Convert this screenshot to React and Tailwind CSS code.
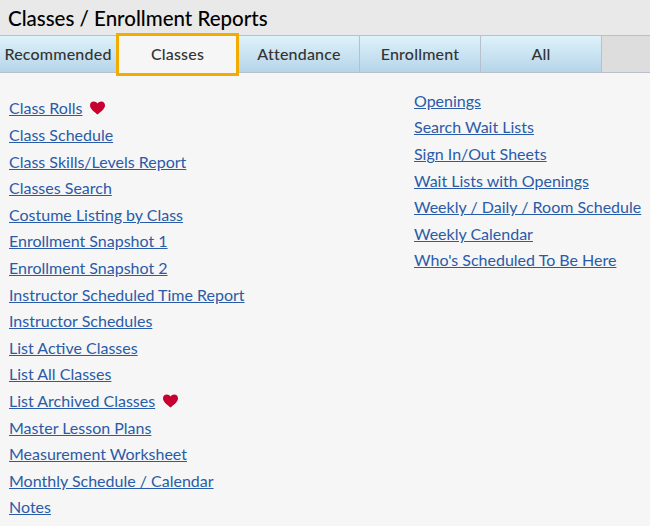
import React from 'react';

const leftLinks = [
  { name: 'Class Rolls', heart: true },
  { name: 'Class Schedule' },
  { name: 'Class Skills/Levels Report' },
  { name: 'Classes Search' },
  { name: 'Costume Listing by Class' },
  { name: 'Enrollment Snapshot 1' },
  { name: 'Enrollment Snapshot 2' },
  { name: 'Instructor Scheduled Time Report' },
  { name: 'Instructor Schedules' },
  { name: 'List Active Classes' },
  { name: 'List All Classes' },
  { name: 'List Archived Classes', heart: true },
  { name: 'Master Lesson Plans' },
  { name: 'Measurement Worksheet' },
  { name: 'Monthly Schedule / Calendar' },
  { name: 'Notes' },
];

const rightLinks = [
  'Openings',
  'Search Wait Lists',
  'Sign In/Out Sheets',
  'Wait Lists with Openings',
  'Weekly / Daily / Room Schedule',
  'Weekly Calendar',
  "Who's Scheduled To Be Here",
];

const Heart = () => (
  <svg viewBox="0 0 16 14" className="w-[15px] h-[14px] ml-[8px] inline-block" fill="#c8002f">
    <path d="M8 14 C6.5 12 0 8.5 0 4.2 C0 1.6 1.7 0 4 0 C5.8 0 7.2 0.8 8 2.2 C8.8 0.8 10.2 0 12 0 C14.3 0 16 1.6 16 4.2 C16 8.5 9.5 12 8 14 Z" />
  </svg>
);

const Tab = ({ label, width }) => (
  <div className={`${width} h-full flex items-center justify-center border-r border-[#b9bfcc] text-[16px] font-medium tracking-[0.2px] text-[#333] bg-gradient-to-b from-[#def2fa] to-[#b6d5e9]`}>
    {label}
  </div>
);

const LinkRow = ({ name, heart }) => (
  <div className="h-[26.6px] flex items-center">
    <a href="#" className="text-[16px] text-[#2a5ba8] underline">{name}</a>
    {heart && <Heart />}
  </div>
);

export default function App() {
  return (
    <div className="w-[650px] h-[526px] overflow-hidden bg-[#f6f6f6] font-['Lato',sans-serif]">
      <div className="h-[35px] bg-[#e9e9e9] pl-2 pt-[5px] text-[20.5px] leading-[26px] font-medium text-black">
        Classes / Enrollment Reports
      </div>

      <div className="relative h-[38px] flex bg-[#dcdddc] border-t border-b border-[#b9bfcc]">
        <Tab label="Recommended" width="w-[117px]" />
        <div className="relative z-10 w-[123px] h-[43px] -mt-[3px] -ml-px flex items-center justify-center pb-[1px] bg-[#f6f6f6] border-[3px] border-[#f2ac00] text-[16px] font-medium tracking-[0.2px] text-[#333]">
          Classes
        </div>
        <Tab label="Attendance" width="w-[121px]" />
        <Tab label="Enrollment" width="w-[121px]" />
        <Tab label="All" width="w-[121px]" />
      </div>

      <div className="flex pl-[9px]">
        <div className="w-[405px] pt-[22.2px]">
          {leftLinks.map((link) => (
            <LinkRow key={link.name} name={link.name} heart={link.heart} />
          ))}
        </div>
        <div className="pt-[14.6px]">
          {rightLinks.map((name) => (
            <LinkRow key={name} name={name} />
          ))}
        </div>
      </div>
    </div>
  );
}
